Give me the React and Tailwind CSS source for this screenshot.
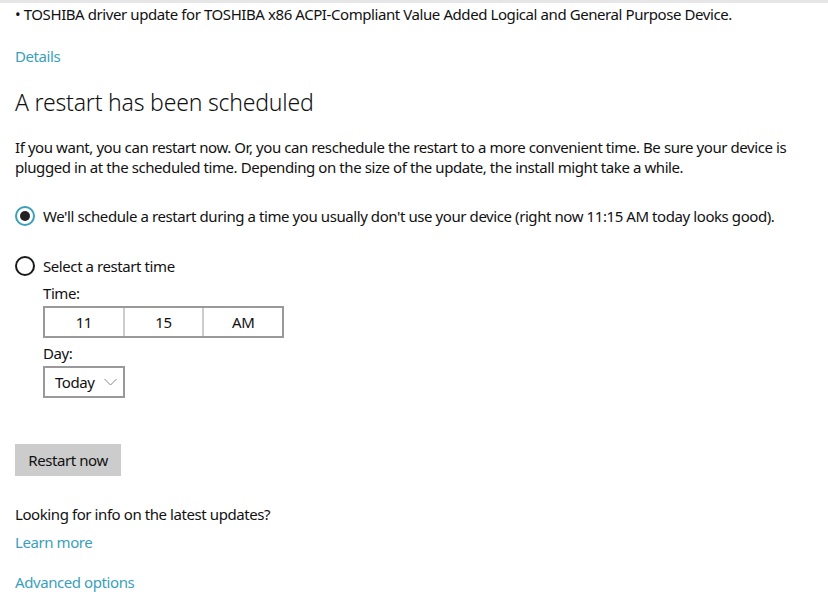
const font = { fontFamily: '"Noto Sans", "Open Sans", sans-serif' };

function Radio({ checked, children }) {
  return (
    <label className="flex items-center gap-[8px] h-[24px]">
      <span
        className={`w-[20px] h-[20px] rounded-full border-2 flex items-center justify-center ${
          checked ? "border-[#3a9fbb]" : "border-[#1a1a1a]"
        }`}
      >
        {checked && <span className="w-[10px] h-[10px] rounded-full bg-[#222]" />}
      </span>
      <span>{children}</span>
    </label>
  );
}

export default function App() {
  return (
    <div
      className="w-[828px] h-[602px] bg-white text-[#111] text-[15px] leading-[20px] overflow-hidden tracking-[-0.42px]"
      style={font}
    >
      <div className="h-[3px] bg-[#e6e6e6]" />
      <div className="pl-[15px]">
        <p className="mt-[1px]">• TOSHIBA driver update for TOSHIBA x86 ACPI-Compliant Value Added Logical and General Purpose Device.</p>

        <p className="mt-[22px] text-[#3a9fbb]">Details</p>

        <h1 className="mt-[21px] text-[23px] leading-[30px] font-light tracking-[-0.2px]">A restart has been scheduled</h1>

        <p className="mt-[20px] pr-[30px]">
          If you want, you can restart now. Or, you can reschedule the restart to a more convenient time. Be sure your device is
          plugged in at the scheduled time. Depending on the size of the update, the install might take a while.
        </p>

        <div className="mt-[27px]">
          <Radio checked>
            We'll schedule a restart during a time you usually don't use your device (right now 11:15 AM today looks good).
          </Radio>
        </div>
        <div className="mt-[26px]">
          <Radio>Select a restart time</Radio>
        </div>

        <div className="pl-[28px]">
          <p className="mt-[5px]">Time:</p>
          <div className="mt-[3px] flex w-[241px] h-[32px] border-2 border-[#999]">
            <span className="flex-1 flex items-center justify-center">11</span>
            <span className="flex-1 flex items-center justify-center border-l-2 border-[#ccc]">15</span>
            <span className="flex-1 flex items-center justify-center border-l-2 border-[#ccc]">AM</span>
          </div>
          <p className="mt-[5px]">Day:</p>
          <div className="mt-[3px] flex items-center w-[82px] h-[32px] border-2 border-[#999] pl-[10px] gap-[9px]">
            <span>Today</span>
            <svg width="13" height="8" viewBox="0 0 13 8" fill="none" stroke="#888" strokeWidth="1">
              <path d="M0.5 1 L6.5 7 L12.5 1" />
            </svg>
          </div>
        </div>

        <button className="mt-[46px] w-[106px] h-[32px] bg-[#cccccc] text-[15px]">Restart now</button>

        <p className="mt-[28px]">Looking for info on the latest updates?</p>
        <p className="mt-[8px] text-[#3a9fbb]">Learn more</p>
        <p className="mt-[20px] text-[#3a9fbb]">Advanced options</p>
      </div>
    </div>
  );
}
